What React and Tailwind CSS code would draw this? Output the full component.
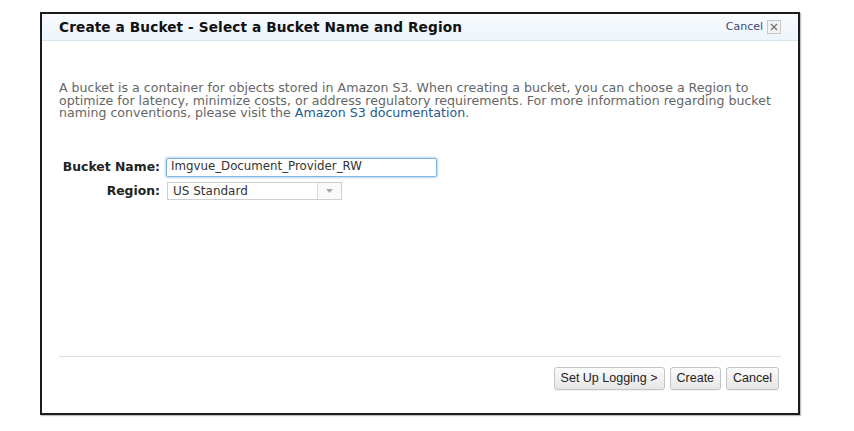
import React from "react";

const sans = { fontFamily: '"DejaVu Sans", Verdana, sans-serif' };

const Button = ({ children }) => (
  <button
    className="h-[23px] px-[6px] rounded-[3px] border border-[#c4c4c4] bg-gradient-to-b from-[#fbfbfb] to-[#e6e6e6] text-[12.5px] text-[#222] leading-none shadow-[0_1px_0_rgba(0,0,0,0.05)]"
    style={{ fontFamily: '"Liberation Sans", Arial, sans-serif' }}
  >
    {children}
  </button>
);

export default function App() {
  return (
    <div className="w-[854px] h-[431px] bg-white pt-[12px] pl-[40px]" style={sans}>
      <div className="w-[760px] h-[403px] border-2 border-[#1c1c1c] flex flex-col shadow-[1px_1px_1px_rgba(0,0,0,0.25)]">
        {/* Header */}
        <div className="h-[27px] border-b border-[#d6e4ec] bg-gradient-to-b from-[#f8fbfe] to-[#edf4fb] flex items-center justify-between pl-[17px] pr-[17px]">
          <h1 className="text-[13.7px] font-bold text-[#111] tracking-[0.1px]">
            Create a Bucket - Select a Bucket Name and Region
          </h1>
          <div className="flex items-center gap-[4px]">
            <span className="text-[11px] text-[#3a4a7a]">Cancel</span>
            <span className="w-[14px] h-[14px] border border-[#c8c8c8] bg-[#f2f2f2] flex items-center justify-center">
              <svg width="8" height="8" viewBox="0 0 8 8">
                <path d="M1 1 L7 7 M7 1 L1 7" stroke="#777" strokeWidth="1.4" />
              </svg>
            </span>
          </div>
        </div>

        {/* Body */}
        <div className="flex-1 flex flex-col px-[17px]">
          <p className="mt-[41px] text-[12.6px] leading-[12.6px] text-[#666] whitespace-nowrap">
            A bucket is a container for objects stored in Amazon S3. When creating a bucket, you can choose a Region to
            <br />
            optimize for latency, minimize costs, or address regulatory requirements. For more information regarding bucket
            <br />
            naming conventions, please visit the <span className="text-[#1d5a8e]">Amazon S3 documentation</span>.
          </p>

          <div className="mt-[38px] flex flex-col gap-[5px]">
            <div className="flex items-center">
              <label className="w-[101px] text-right text-[12.4px] font-bold text-[#222] whitespace-nowrap">Bucket Name:</label>
              <div className="ml-[6px] w-[271px] h-[19px] border border-[#7db6e3] rounded-[2px] shadow-[0_0_2px_1px_rgba(120,180,230,0.55)] flex items-center pl-[4px] text-[11.8px] text-[#333]">
                Imgvue_Document_Provider_RW
              </div>
            </div>
            <div className="flex items-center">
              <label className="w-[101px] text-right text-[12.4px] font-bold text-[#222]">Region:</label>
              <div className="ml-[7px] w-[175px] h-[18px] border border-[#cfcfcf] flex items-center text-[12px] text-[#333]">
                <span className="flex-1 pl-[5px]">US Standard</span>
                <span className="w-[24px] h-full border-l border-[#dcdcdc] bg-[#fafafa] flex items-center justify-center">
                  <svg width="7" height="4" viewBox="0 0 7 4">
                    <path d="M0 0 L7 0 L3.5 4 Z" fill="#aaa" />
                  </svg>
                </span>
              </div>
            </div>
          </div>

          <div className="flex-1" />

          <div className="border-t border-[#dedede]" />
          <div className="mt-[10px] mb-[23px] flex justify-end gap-[5px] pr-[2px]">
            <Button>Set Up Logging &gt;</Button>
            <Button>Create</Button>
            <Button>Cancel</Button>
          </div>
        </div>
      </div>
    </div>
  );
}
